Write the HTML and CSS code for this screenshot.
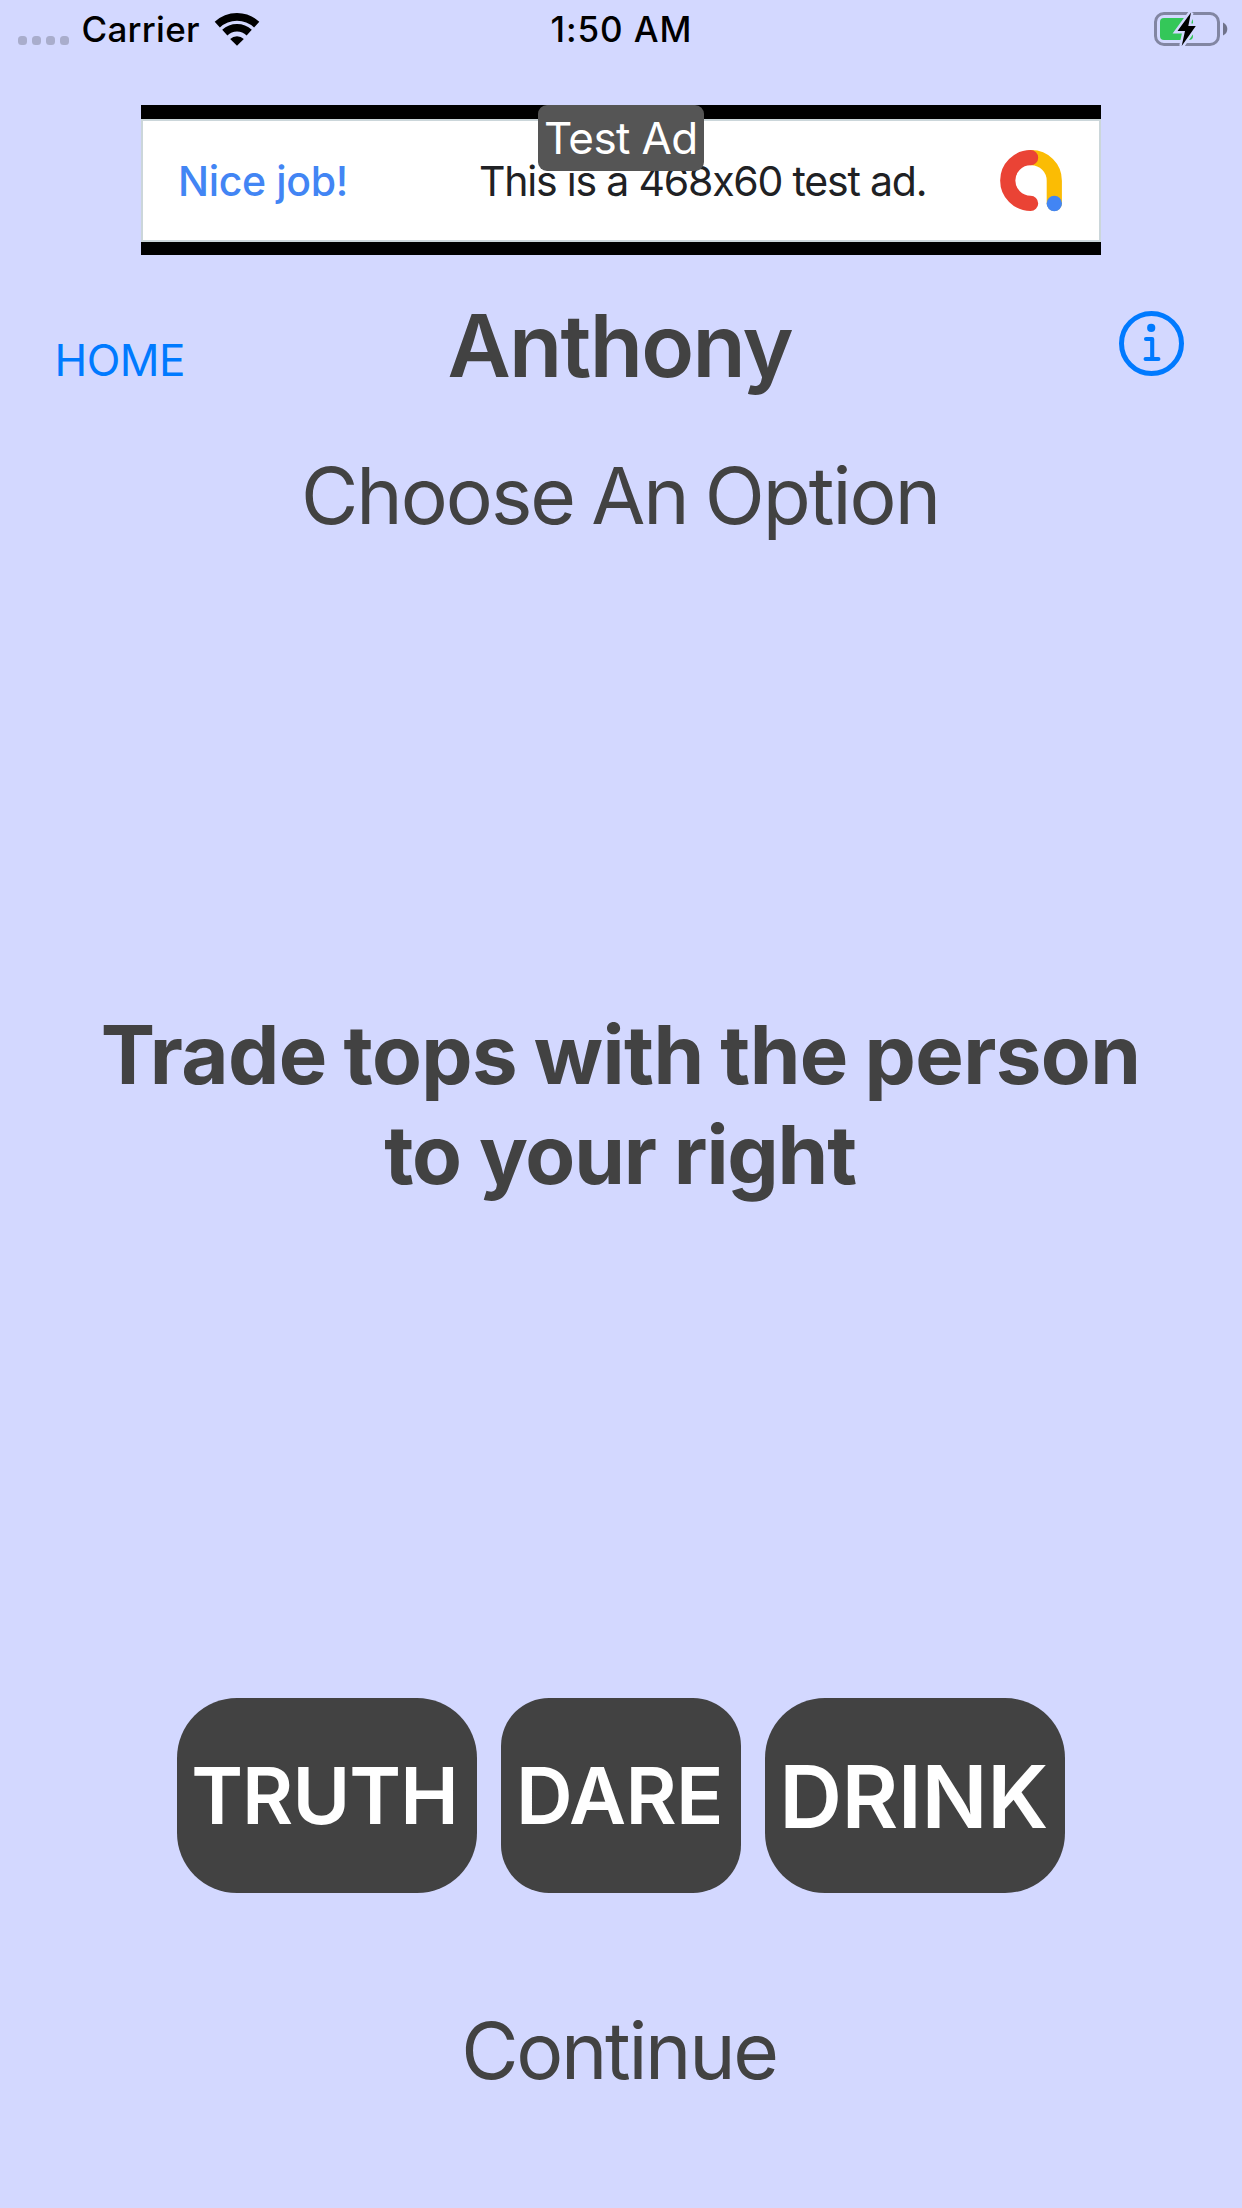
FILE: index.html
```html
<!DOCTYPE html>
<html lang="en">
<head>
<meta charset="utf-8">
<title>Truth, Dare or Drink</title>
<link rel="stylesheet" href="styles.css">
</head>
<body>
<div class="screen">
  <div class="status">
    <div class="status-left">
      <div class="signal"><i></i><i></i><i></i><i></i></div>
      <span class="carrier">Carrier</span>
      <svg class="wifi" width="46" height="34" viewBox="0 0 46 34">
        <path d="M3.3 12.6A28.85 28.85 0 0 1 42.7 12.6M10.8 20.6A17.9 17.9 0 0 1 35.2 20.6" fill="none" stroke="#000" stroke-width="7.6"/>
        <path d="M23 33.7L16.2 26.9A10 10 0 0 1 29.8 26.9Z"/>
      </svg>
    </div>
    <span class="clock">1:50 AM</span>
    <svg class="battery" width="80" height="44" viewBox="0 0 80 44">
      <rect x="5.5" y="5.5" width="63" height="31" rx="8.5" fill="none" stroke="#8286a2" stroke-width="3"/>
      <rect x="10" y="10" width="33" height="22" rx="4" fill="#34c759"/>
      <path d="M73 14.5Q77.3 16.5 77.3 21T73 27.5Z" fill="#70738b"/>
      <path d="M41 4.5L27.5 23H35L31.7 38L45.8 18H38.3Z" fill="#000" stroke="#d3d8ff" stroke-width="5" paint-order="stroke"/>
    </svg>
  </div>

  <div class="ad">
    <div class="ad-card">
      <span class="ad-lead">Nice job!</span>
      <span class="ad-text">This is a 468x60 test ad.</span>
      <svg class="ad-logo" width="63" height="62" viewBox="0 0 63 62" fill="none" stroke-width="15.2" stroke-linecap="round">
        <path d="M31 7.7A23 23 0 0 1 54.3 31V53.5" stroke="#fbbc04"/>
        <path d="M30.6 7.7A22.85 22.85 0 0 0 30.6 53.4" stroke="#ea4335"/>
        <circle cx="54.3" cy="53.5" r="7.7" fill="#4285f4"/>
      </svg>
    </div>
    <span class="ad-badge">Test Ad</span>
  </div>

  <header class="header">
    <a class="home">HOME</a>
    <h1 class="player">Anthony</h1>
    <svg class="info" width="66" height="66" viewBox="0 0 66 66" fill="none" stroke="#007aff" stroke-linecap="round" stroke-linejoin="round">
      <circle cx="32.5" cy="32.5" r="30" stroke-width="5"/>
      <circle cx="32.2" cy="16.9" r="4.1" fill="#007aff" stroke="none"/>
      <path d="M27 28H33.2V48M26.6 48H39.4" stroke-width="4.1"/>
    </svg>
  </header>

  <h2 class="subtitle">Choose An Option</h2>

  <p class="prompt"><span class="line-one">Trade tops with the person</span> <span class="line-two">to your right</span></p>

  <div class="choices">
    <button class="choice truth">TRUTH</button>
    <button class="choice dare">DARE</button>
    <button class="choice drink">DRINK</button>
  </div>

  <div class="continue">Continue</div>
</div>
</body>
</html>
```
FILE: styles.css
```css
* { box-sizing: border-box; }

body {
  margin: 0;
  background: #d3d8ff;
  color: #424242;
  font-family: Inter, "Liberation Sans", sans-serif;
}

.screen {
  display: flex;
  flex-direction: column;
  width: 1242px;
  height: 2208px;
  overflow: hidden;
  white-space: nowrap;
}

.status {
  display: grid;
  grid-template-columns: 1fr auto 1fr;
  height: 58px;
  line-height: 58px;
  padding: 0 12px 0 18px;
  color: #000;
  font-size: 35px;
  font-weight: 500;
}

.status-left { display: flex; }

.signal { display: flex; gap: 5px; padding-top: 36px; }

.signal i {
  width: 9px;
  height: 9px;
  border-radius: 3.5px;
  background: #a9adcc;
}

.carrier { width: 145px; padding-left: 12.5px; letter-spacing: 0.27px; }
.wifi { margin-top: 12px; }
.clock { letter-spacing: 0.9px; padding-right: 5px; }
.battery { justify-self: end; margin-top: 8px; }

.ad {
  position: relative;
  width: 960px;
  height: 150px;
  margin: 47px 0 0 141px;
  padding: 14px 0 13px;
  background: #000;
}

.ad-card {
  display: flex;
  align-items: center;
  height: 123px;
  padding-left: 35px;
  border: 2px solid #cbd6da;
  background: #fff;
  color: #202124;
  font-size: 41px;
}

.ad-lead { width: 301px; color: #4285f4; font-weight: 500; letter-spacing: -0.35px; }
.ad-text { width: 521px; letter-spacing: -1.2px; }

.ad-badge {
  position: absolute;
  top: 0;
  left: 397px;
  width: 166px;
  height: 66px;
  padding-left: 6px;
  border-radius: 9px;
  background: #555;
  color: #fff;
  font-size: 44px;
  line-height: 66px;
  letter-spacing: -0.6px;
}

.header {
  display: grid;
  grid-template-columns: 1fr auto 1fr;
  grid-template-rows: 116px;
  align-items: center;
  height: 116px;
  margin-top: 32px;
  padding: 0 57px 0 54.5px;
}

.home {
  padding-top: 30px;
  color: #007aff;
  font-size: 44px;
  letter-spacing: -0.53px;
}

.player {
  margin: 0;
  padding-top: 2px;
  font-size: 87px;
  font-weight: 600;
  line-height: 114px;
  letter-spacing: -1.7px;
}

.info { justify-self: end; margin-bottom: 2px; }

.subtitle {
  margin: 43px 0 0;
  padding-right: 2px;
  font-size: 78.5px;
  font-weight: 400;
  line-height: 100px;
  letter-spacing: -2px;
  word-spacing: -3px;
  text-align: center;
}

.prompt {
  margin: 459px 0 0;
  font-size: 81.5px;
  font-weight: 700;
  line-height: 100px;
  text-align: center;
}

.prompt span { display: block; }
.line-one { padding-right: 1px; letter-spacing: -0.6px; word-spacing: -2px; }
.line-two { padding-right: 2px; letter-spacing: -1.19px; }

.choices {
  display: flex;
  justify-content: center;
  gap: 24px;
  margin-top: 493px;
}

.choice {
  height: 195px;
  padding: 0;
  border: 0;
  border-radius: 60px;
  background: #424242;
  color: #fff;
  font: 600 78.5px/195px Inter, "Liberation Sans", sans-serif;
}

.truth { width: 300px; padding-right: 5px; letter-spacing: -0.9px; }
.dare { width: 240px; padding-right: 3px; border-radius: 48px; letter-spacing: -0.64px; }
.drink { width: 300px; padding-top: 1px; padding-right: 3px; font-size: 87px; letter-spacing: -0.43px; }

.continue {
  margin-top: 108px;
  padding-right: 4px;
  font-size: 78.5px;
  line-height: 100px;
  letter-spacing: -2.33px;
  text-align: center;
}
```
